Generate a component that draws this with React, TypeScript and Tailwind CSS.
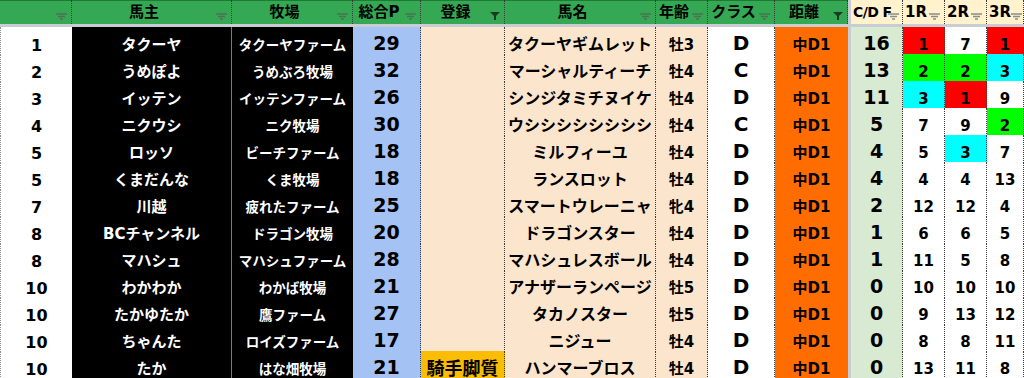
import clsx from "clsx";

// column widths taken from the sheet, last one fills up to 1024
const GRID =
  "grid grid-cols-[72px_160px_121px_68px_84px_151px_52px_67px_73px_3px_52px_42px_42px_minmax(0,1fr)]";

type Race = [number, "" | "r" | "g" | "c"];

interface Row {
  rank: number;
  owner: string;
  farm: string;
  point: number;
  reg?: string;
  horse: string;
  age: string;
  cls: string;
  cdf: number;
  races: Race[];
}

const rows: Row[] = [
  { rank: 1, owner: "タクーヤ", farm: "タクーヤファーム", point: 29, horse: "タクーヤギムレット", age: "牡3", cls: "D", cdf: 16, races: [[1, "r"], [7, ""], [1, "r"]] },
  { rank: 2, owner: "うめぽよ", farm: "うめぶろ牧場", point: 32, horse: "マーシャルティーチ", age: "牡4", cls: "C", cdf: 13, races: [[2, "g"], [2, "g"], [3, "c"]] },
  { rank: 3, owner: "イッテン", farm: "イッテンファーム", point: 26, horse: "シンジタミチヌイケ", age: "牡4", cls: "D", cdf: 11, races: [[3, "c"], [1, "r"], [9, ""]] },
  { rank: 4, owner: "ニクウシ", farm: "ニク牧場", point: 30, horse: "ウシシシシシシシシ", age: "牡4", cls: "C", cdf: 5, races: [[7, ""], [9, ""], [2, "g"]] },
  { rank: 5, owner: "ロッソ", farm: "ビーチファーム", point: 18, horse: "ミルフィーユ", age: "牡4", cls: "D", cdf: 4, races: [[5, ""], [3, "c"], [7, ""]] },
  { rank: 5, owner: "くまだんな", farm: "くま牧場", point: 18, horse: "ランスロット", age: "牡4", cls: "D", cdf: 4, races: [[4, ""], [4, ""], [13, ""]] },
  { rank: 7, owner: "川越", farm: "疲れたファーム", point: 25, horse: "スマートウレーニャ", age: "牝4", cls: "D", cdf: 2, races: [[12, ""], [12, ""], [4, ""]] },
  { rank: 8, owner: "BCチャンネル", farm: "ドラゴン牧場", point: 20, horse: "ドラゴンスター", age: "牡4", cls: "D", cdf: 1, races: [[6, ""], [6, ""], [5, ""]] },
  { rank: 8, owner: "マハシュ", farm: "マハシュファーム", point: 28, horse: "マハシュレスボール", age: "牡4", cls: "D", cdf: 1, races: [[11, ""], [5, ""], [8, ""]] },
  { rank: 10, owner: "わかわか", farm: "わかば牧場", point: 21, horse: "アナザーランページ", age: "牡5", cls: "D", cdf: 0, races: [[10, ""], [10, ""], [10, ""]] },
  { rank: 10, owner: "たかゆたか", farm: "鷹ファーム", point: 27, horse: "タカノスター", age: "牡5", cls: "D", cdf: 0, races: [[9, ""], [13, ""], [12, ""]] },
  { rank: 10, owner: "ちゃんた", farm: "ロイズファーム", point: 17, horse: "ニジュー", age: "牡4", cls: "D", cdf: 0, races: [[8, ""], [8, ""], [11, ""]] },
  { rank: 10, owner: "たか", farm: "はな畑牧場", point: 21, reg: "騎手脚質", horse: "ハンマーブロス", age: "牡4", cls: "D", cdf: 0, races: [[13, ""], [11, ""], [8, ""]] },
];

const raceBg = {
  "": "bg-white",
  r: "bg-[#ff0000]",
  g: "bg-[#00ff00]",
  c: "bg-[#00ffff]",
};

function FilterIcon({ active, cream }: { active?: boolean; cream?: boolean }) {
  if (active) {
    return (
      <svg width="10" height="8" viewBox="0 0 10 8" className="shrink-0">
        <path d="M0 0H10L6 4V8H4V4Z" fill="#1b3a23" />
      </svg>
    );
  }
  return (
    <svg width="11" height="7" viewBox="0 0 11 7" className="shrink-0">
      <path
        d="M0 1H11M2 3.5H9M4 6H7"
        stroke={cream ? "#8c8c8c" : "#4b7155"}
        strokeWidth="1.4"
      />
    </svg>
  );
}

function HeadCell({
  label,
  active,
  cream,
  start,
  small,
}: {
  label?: string;
  active?: boolean;
  cream?: boolean;
  start?: boolean;
  small?: boolean;
}) {
  return (
    <div
      className={clsx(
        "flex h-full items-center border-r border-dotted border-[#3a3a3a] pr-[4px]",
        cream ? "bg-[#fff2cc]" : "bg-[#34a853] shadow-[inset_0_1px_0_#1f7a38]"
      )}
    >
      <span
        className={clsx(
          "flex-1 whitespace-nowrap pt-[1px] font-bold text-black",
          small ? "-mr-[3px] text-[14px] tracking-[-0.6px]" : "text-[15px]",
          start ? "pl-[2px] text-left" : "text-center"
        )}
      >
        {label}
      </span>
      <span className="mt-[9px]">
        <FilterIcon active={active} cream={cream} />
      </span>
    </div>
  );
}

const dotted = "border-r border-b border-dotted border-[#3c3c3c]";

function DataRow({ row }: { row: Row }) {
  return (
    <div className={clsx(GRID, "h-[27px]")}>
      <div className="flex items-center justify-center border-l border-dotted border-[#8a8a8a] bg-white pt-[6px] text-[16px] font-bold text-black shadow-[inset_0_-2px_0_#dcdcdc]">
        {row.rank}
      </div>
      <div className="flex items-center justify-center whitespace-nowrap border-r border-b border-[#7a7a7a] bg-black pt-[5px] text-[15px] font-bold text-white">
        {row.owner}
      </div>
      <div className="flex items-center justify-center whitespace-nowrap border-b border-[#7a7a7a] bg-black pt-[6px] text-[13.5px] font-bold text-white">
        {row.farm}
      </div>
      <div className={clsx(dotted, "flex items-center justify-center bg-[#a4c2f4] pt-[1px] text-[19px] font-bold text-black")}>
        {row.point}
      </div>
      <div
        className={clsx(
          dotted,
          "flex items-center justify-center whitespace-nowrap pt-[3px] text-[18px] font-bold text-black",
          row.reg ? "bg-[#fbbc04]" : "bg-[#fce5cd]"
        )}
      >
        {row.reg}
      </div>
      <div className={clsx(dotted, "flex items-center justify-center overflow-hidden whitespace-nowrap bg-[#fce5cd] pt-[4px] text-[16px] font-bold text-black")}>
        {row.horse}
      </div>
      <div className={clsx(dotted, "flex items-center justify-center bg-[#fce5cd] pt-[6px] text-[15px] font-bold text-black")}>
        {row.age}
      </div>
      <div className={clsx(dotted, "flex items-center justify-center bg-white pt-[1px] text-[20px] font-bold text-black")}>
        {row.cls}
      </div>
      <div className="flex items-center justify-center border-b border-dotted border-[#3c3c3c] bg-[#ff6d01] pt-[6px] text-[15px] font-bold text-black">
        中D1
      </div>
      <div className="bg-[#c9cdd1]" />
      <div className={clsx(dotted, "flex items-center justify-center bg-[#d9ead3] pt-[1px] text-[19px] font-bold text-black")}>
        {row.cdf}
      </div>
      {row.races.map(([n, c], i) => (
        <div
          key={i}
          className={clsx(
            dotted,
            "flex items-center justify-center pt-[6px] text-[15px] font-bold text-black",
            raceBg[c]
          )}
        >
          {n}
        </div>
      ))}
    </div>
  );
}

export default function App() {
  return (
    <div className="h-[378px] w-[1024px] overflow-hidden bg-white font-['DejaVu_Sans','Noto_Sans_CJK_JP',sans-serif]">
      <div className={clsx(GRID, "h-[24px] border-b-2 border-[#2e2e2e]")}>
        <HeadCell />
        <HeadCell label="馬主" />
        <HeadCell label="牧場" />
        <HeadCell label="総合P" />
        <HeadCell label="登録" active />
        <HeadCell label="馬名" />
        <HeadCell label="年齢" />
        <HeadCell label="クラス" />
        <HeadCell label="距離" active />
        <div className="bg-[#c9cdd1]" />
        <HeadCell label="C/D F" cream start small />
        <HeadCell label="1R" cream start />
        <HeadCell label="2R" cream start />
        <HeadCell label="3R" cream start />
      </div>
      <div className="h-[3px] bg-[#c9cdd1]" />
      {rows.map((row, i) => (
        <DataRow key={i} row={row} />
      ))}
    </div>
  );
}
